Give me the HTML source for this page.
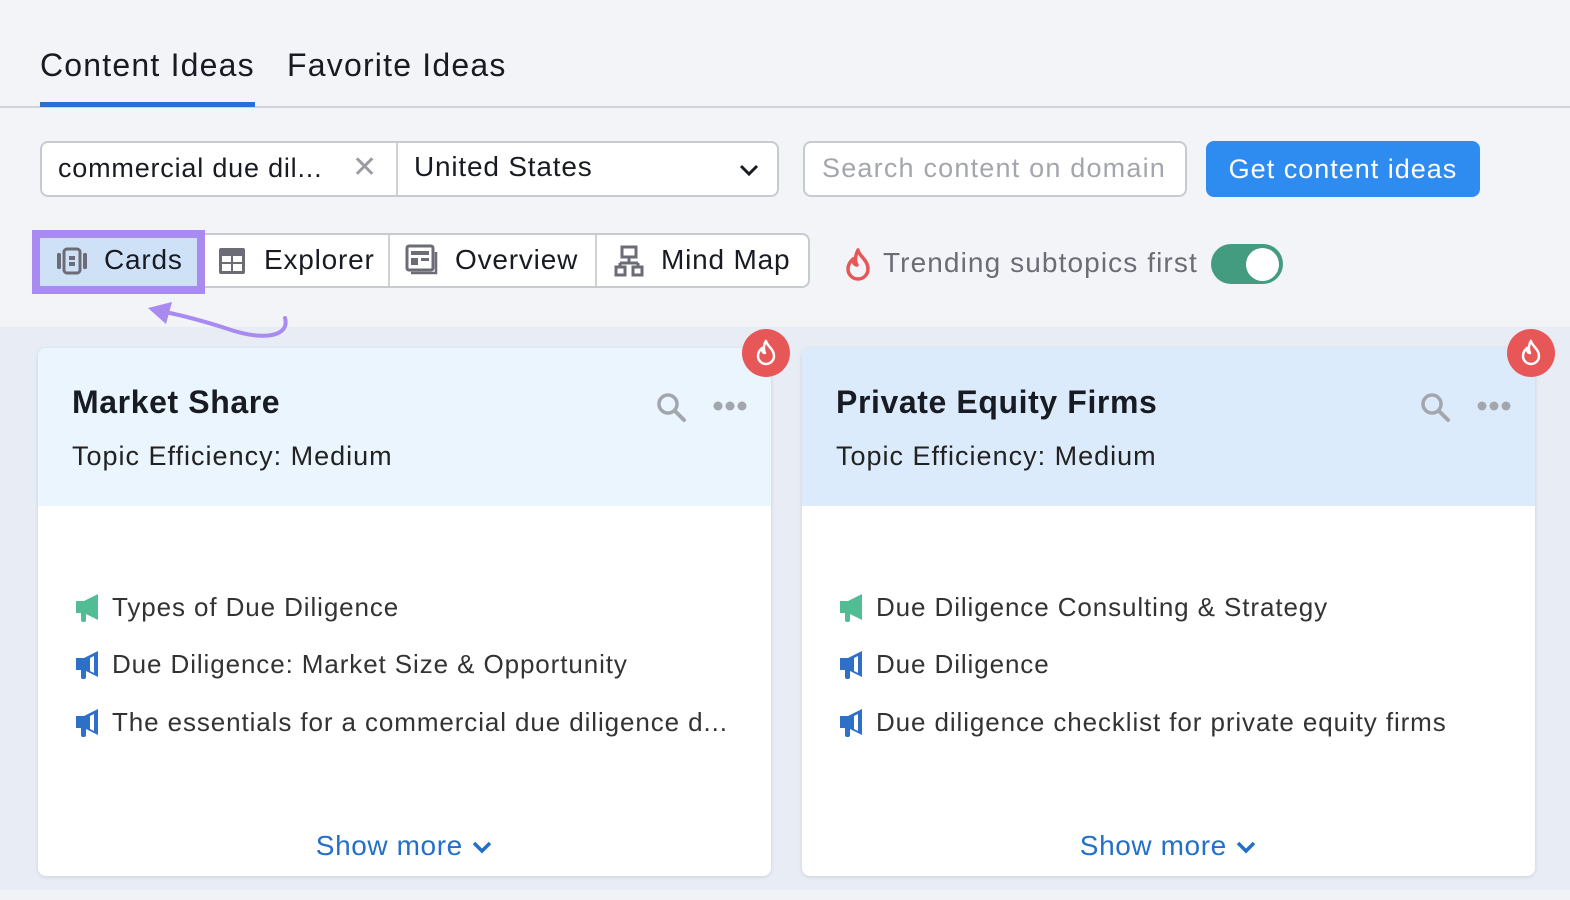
<!DOCTYPE html>
<html><head><style>
*{box-sizing:border-box;margin:0;padding:0}
body{width:1570px;height:900px;background:#f3f4f8;font-family:"Liberation Sans",sans-serif;position:relative;overflow:hidden;color:#222;letter-spacing:0.8px}
.a{position:absolute}
.tab{font-size:32px;top:47px;color:#191b23;letter-spacing:1.2px}
.box{border:2px solid #c8cad2;border-radius:8px;background:#fff}
.seg{position:absolute;top:233px;height:55px;border:2px solid #c8cad2;background:#fff;font-size:28px;color:#222;display:flex;align-items:center}
.card{position:absolute;top:348px;width:733px;height:528px;background:#fff;border-radius:8px;box-shadow:0 1px 4px rgba(0,0,0,.12);overflow:hidden}
.hd{height:158px;padding:36px 34px}
.hd h2{font-size:32px;font-weight:bold;color:#191b23;letter-spacing:0.6px}
.hd p{font-size:27px;margin-top:20px;color:#222;letter-spacing:1px}
.li{position:absolute;left:36px;font-size:26px;color:#333;display:flex;align-items:center;gap:12px;letter-spacing:0.9px}
.sm{position:absolute;bottom:14px;width:100%;text-align:center;font-size:28px;color:#2470c8;letter-spacing:0.6px}
.fire{position:absolute;width:48px;height:48px;border-radius:50%;background:#e85757;top:329px}
</style></head><body>
<div class="a tab" style="left:40px">Content Ideas</div>
<div class="a tab" style="left:287px">Favorite Ideas</div>
<div class="a" style="left:0;top:106px;width:1570px;height:2px;background:#d2d4db"></div>
<div class="a" style="left:40px;top:102px;width:215px;height:5px;background:#2a70d0"></div>

<div class="a box" style="left:40px;top:141px;width:739px;height:56px"></div>
<div class="a" style="left:396px;top:143px;width:2px;height:52px;background:#d0d2d8"></div>
<div class="a" style="left:58px;top:153px;font-size:27px;color:#191b23">commercial due dil...</div>
<div class="a" style="left:352px;top:150px;font-size:30px;color:#9a9ba3">✕</div>
<div class="a" style="left:414px;top:151px;font-size:28px;color:#191b23">United States</div>
<svg class="a" style="left:738px;top:162px" width="22" height="16" viewBox="0 0 22 16"><path d="M3 4l8 8 8-8" fill="none" stroke="#191b23" stroke-width="3"/></svg>
<div class="a box" style="left:803px;top:141px;width:384px;height:56px"></div>
<div class="a" style="left:822px;top:153px;font-size:27px;color:#a4a6ae;letter-spacing:1.2px">Search content on domain</div>
<div class="a" style="left:1206px;top:141px;width:274px;height:56px;background:#2e8cf0;border-radius:8px;color:#fff;font-size:27px;text-align:center;line-height:56px;letter-spacing:1px">Get content ideas</div>

<div class="a" style="left:0;top:327px;width:1570px;height:573px;background:#e8edf5"></div>
<div class="a" style="left:0;top:890px;width:1570px;height:10px;background:#f0f2f6"></div>

<div class="seg" style="left:198px;width:612px;border-radius:0 8px 8px 0"></div>
<div class="a" style="left:388px;top:235px;width:2px;height:51px;background:#d0d2d8"></div>
<div class="a" style="left:595px;top:235px;width:2px;height:51px;background:#d0d2d8"></div>
<div class="a" style="left:32px;top:230px;width:173px;height:64px;background:#a98af0"></div>
<div class="a" style="left:40px;top:238px;width:157px;height:48px;background:#cfe1f7"></div>
<svg class="a" style="left:55px;top:246px" width="34" height="30" viewBox="0 0 34 30"><rect x="9" y="3" width="16" height="24" rx="3" fill="none" stroke="#6b6c75" stroke-width="3"/><rect x="2" y="7" width="4" height="16" rx="1.5" fill="#6b6c75"/><rect x="28" y="7" width="4" height="16" rx="1.5" fill="#6b6c75"/><rect x="14" y="10" width="6" height="4" fill="#6b6c75"/><rect x="14" y="16" width="6" height="4" fill="#6b6c75"/></svg>
<div class="a" style="left:104px;top:244px;font-size:28px;color:#191b23">Cards</div>
<svg class="a" style="left:218px;top:247px" width="28" height="28" viewBox="0 0 28 28"><rect x="1" y="1" width="26" height="26" rx="2" fill="#6b6c75"/><rect x="4" y="9" width="9" height="6" fill="#fff"/><rect x="15" y="9" width="9" height="6" fill="#fff"/><rect x="4" y="17" width="9" height="7" fill="#fff"/><rect x="15" y="17" width="9" height="7" fill="#fff"/></svg>
<div class="a" style="left:264px;top:244px;font-size:28px;color:#191b23">Explorer</div>
<svg class="a" style="left:405px;top:244px" width="34" height="32" viewBox="0 0 34 32"><rect x="2" y="2" width="26" height="24" rx="2" fill="none" stroke="#6b6c75" stroke-width="3"/><path d="M6 29h25V8" fill="none" stroke="#6b6c75" stroke-width="2.5"/><rect x="6" y="7" width="18" height="4" fill="#6b6c75"/><rect x="6" y="14" width="7" height="7" fill="#6b6c75"/><rect x="16" y="14" width="8" height="3" fill="#6b6c75"/></svg>
<div class="a" style="left:455px;top:244px;font-size:28px;color:#191b23">Overview</div>
<svg class="a" style="left:614px;top:245px" width="30" height="32" viewBox="0 0 30 32"><rect x="8" y="2" width="14" height="10" fill="none" stroke="#6b6c75" stroke-width="3"/><path d="M15 12v6M6 18h18M6 18v4M24 18v4" stroke="#6b6c75" stroke-width="3" fill="none"/><rect x="2" y="22" width="9" height="8" fill="none" stroke="#6b6c75" stroke-width="3"/><rect x="19" y="22" width="9" height="8" fill="none" stroke="#6b6c75" stroke-width="3"/></svg>
<div class="a" style="left:661px;top:244px;font-size:28px;color:#191b23">Mind Map</div>
<svg class="a" style="left:145px;top:300px" width="150" height="45" viewBox="0 0 150 45"><path d="M140 18c5 18-20 24-60 10C55 20 35 15 20 12" fill="none" stroke="#a98af0" stroke-width="4" stroke-linecap="round"/><path d="M3 8l24-6-6 22z" fill="#a98af0"/></svg>

<svg class="a" style="left:845px;top:247px" width="26" height="34" viewBox="0 0 26 34"><path d="M13 3c1 6 10 10 10 19a10 10 0 0 1-20 0c0-5 3-8 5-10 0 4 2 6 4 6-3-5-1-11 1-15z" fill="none" stroke="#e85757" stroke-width="3.5" stroke-linejoin="round"/></svg>
<div class="a" style="left:883px;top:247px;font-size:28px;color:#6b6c75;letter-spacing:1.1px">Trending subtopics first</div>
<div class="a" style="left:1211px;top:244px;width:72px;height:40px;border-radius:20px;background:#439b80"></div>
<div class="a" style="left:1246px;top:248px;width:33px;height:33px;border-radius:50%;background:#fff"></div>

<div class="card" style="left:38px">
 <div class="hd" style="background:#eaf5fd"><h2>Market Share</h2><p>Topic Efficiency: Medium</p></div>
 <div class="li" style="top:244px"><svg width="26" height="30" viewBox="0 0 26 30"><path d="M2 8h8l14-7v26L10 20H2z" fill="#52bd94"/><rect x="7" y="18" width="5" height="11" rx="2" fill="#52bd94"/></svg>Types of Due Diligence</div>
 <div class="li" style="top:301px"><svg width="26" height="30" viewBox="0 0 26 30"><path d="M2 8h8l14-7v26L10 20H2z" fill="#2e6fc8"/><rect x="7" y="18" width="5" height="11" rx="2" fill="#2e6fc8"/><path d="M16 8v13l4 2V6z" fill="#fff"/></svg>Due Diligence: Market Size &amp; Opportunity</div>
 <div class="li" style="top:359px"><svg width="26" height="30" viewBox="0 0 26 30"><path d="M2 8h8l14-7v26L10 20H2z" fill="#2e6fc8"/><rect x="7" y="18" width="5" height="11" rx="2" fill="#2e6fc8"/><path d="M16 8v13l4 2V6z" fill="#fff"/></svg>The essentials for a commercial due diligence d...</div>
 <div class="sm">Show more <svg width="22" height="16" viewBox="0 0 22 16"><path d="M3 4l8 8 8-8" fill="none" stroke="#2470c8" stroke-width="3.5"/></svg></div>
 <svg class="a" style="left:618px;top:44px" width="32" height="32" viewBox="0 0 32 32"><circle cx="12" cy="12" r="9" fill="none" stroke="#a4a6ae" stroke-width="3.5"/><path d="M19 19l9 9" stroke="#a4a6ae" stroke-width="4" stroke-linecap="round"/></svg>
 <svg class="a" style="left:674px;top:52px" width="36" height="12"><circle cx="6" cy="6" r="4.5" fill="#a4a6ae"/><circle cx="18" cy="6" r="4.5" fill="#a4a6ae"/><circle cx="30" cy="6" r="4.5" fill="#a4a6ae"/></svg>
</div>
<div class="card" style="left:802px">
 <div class="hd" style="background:#dcebfb"><h2>Private Equity Firms</h2><p>Topic Efficiency: Medium</p></div>
 <div class="li" style="top:244px"><svg width="26" height="30" viewBox="0 0 26 30"><path d="M2 8h8l14-7v26L10 20H2z" fill="#52bd94"/><rect x="7" y="18" width="5" height="11" rx="2" fill="#52bd94"/></svg>Due Diligence Consulting &amp; Strategy</div>
 <div class="li" style="top:301px"><svg width="26" height="30" viewBox="0 0 26 30"><path d="M2 8h8l14-7v26L10 20H2z" fill="#2e6fc8"/><rect x="7" y="18" width="5" height="11" rx="2" fill="#2e6fc8"/><path d="M16 8v13l4 2V6z" fill="#fff"/></svg>Due Diligence</div>
 <div class="li" style="top:359px"><svg width="26" height="30" viewBox="0 0 26 30"><path d="M2 8h8l14-7v26L10 20H2z" fill="#2e6fc8"/><rect x="7" y="18" width="5" height="11" rx="2" fill="#2e6fc8"/><path d="M16 8v13l4 2V6z" fill="#fff"/></svg>Due diligence checklist for private equity firms</div>
 <div class="sm">Show more <svg width="22" height="16" viewBox="0 0 22 16"><path d="M3 4l8 8 8-8" fill="none" stroke="#2470c8" stroke-width="3.5"/></svg></div>
 <svg class="a" style="left:618px;top:44px" width="32" height="32" viewBox="0 0 32 32"><circle cx="12" cy="12" r="9" fill="none" stroke="#a4a6ae" stroke-width="3.5"/><path d="M19 19l9 9" stroke="#a4a6ae" stroke-width="4" stroke-linecap="round"/></svg>
 <svg class="a" style="left:674px;top:52px" width="36" height="12"><circle cx="6" cy="6" r="4.5" fill="#a4a6ae"/><circle cx="18" cy="6" r="4.5" fill="#a4a6ae"/><circle cx="30" cy="6" r="4.5" fill="#a4a6ae"/></svg>
</div>
<div class="fire" style="left:742px"><svg width="48" height="48" viewBox="0 0 48 48"><path d="M24 12c1 5 8 8 8 15a8 8 0 0 1-16 0c0-4 2-6 4-8 0 3 1 5 3 5-2-4-1-9 1-12z" fill="none" stroke="#fff" stroke-width="2.5" stroke-linejoin="round"/></svg></div>
<div class="fire" style="left:1507px"><svg width="48" height="48" viewBox="0 0 48 48"><path d="M24 12c1 5 8 8 8 15a8 8 0 0 1-16 0c0-4 2-6 4-8 0 3 1 5 3 5-2-4-1-9 1-12z" fill="none" stroke="#fff" stroke-width="2.5" stroke-linejoin="round"/></svg></div>
</body></html>
